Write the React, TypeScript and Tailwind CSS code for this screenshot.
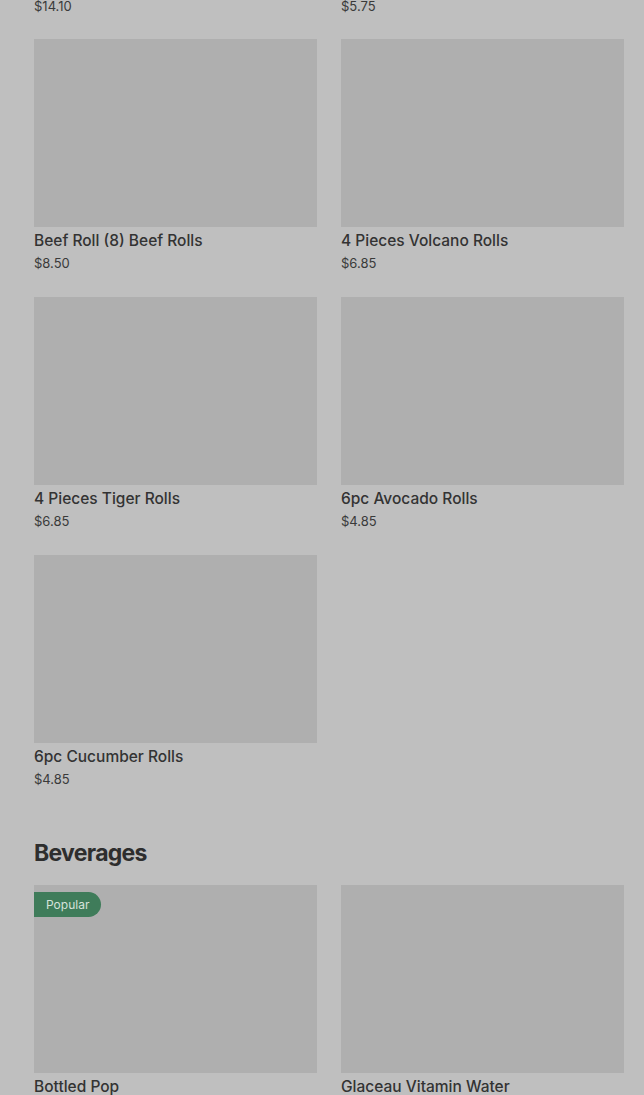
type Item = { name: string; price: string; badge?: string };

// row above the fold: only the prices are still on screen
const scrolledPast = ["$14.10", "$5.75"];

const rolls: Item[] = [
  { name: "Beef Roll (8) Beef Rolls", price: "$8.50" },
  { name: "4 Pieces Volcano Rolls", price: "$6.85" },
  { name: "4 Pieces Tiger Rolls", price: "$6.85" },
  { name: "6pc Avocado Rolls", price: "$4.85" },
  { name: "6pc Cucumber Rolls", price: "$4.85" },
];

const beverages: Item[] = [
  { name: "Bottled Pop", price: "$2.50", badge: "Popular" },
  { name: "Glaceau Vitamin Water", price: "$3.50" },
];

function Card({ item }: { item: Item }) {
  return (
    <div className="flex flex-col">
      <div className="relative h-[188px] bg-[#afafaf]">
        {item.badge && (
          <span className="absolute left-0 top-[7px] flex h-[25px] items-center rounded-r-full bg-[#3f7c5a] pl-3 pr-3 text-[12px] text-[#d6e2da]">
            {item.badge}
          </span>
        )}
      </div>
      <div className="mt-[3px] h-[22px] text-[15.5px] leading-[22px] font-medium text-[#333333]">
        {item.name}
      </div>
      <div className="mt-[1px] h-[20px] text-[13px] leading-[20px] text-[#3a3a3a]">
        {item.price}
      </div>
    </div>
  );
}

export default function App() {
  return (
    <div
      className="min-h-[1095px] overflow-hidden bg-[#bfbfbf] pl-[34px] pr-[20px]"
      style={{ fontFamily: "Inter, 'Noto Sans', sans-serif" }}
    >
      <div className="-mt-[4px] grid grid-cols-2 gap-x-[24px]">
        {scrolledPast.map((p) => (
          <div key={p} className="h-[20px] text-[13px] leading-[20px] text-[#3a3a3a]">
            {p}
          </div>
        ))}
      </div>

      <div className="mt-[23px] grid grid-cols-2 gap-x-[24px] gap-y-[24px]">
        {rolls.map((it) => (
          <Card key={it.name} item={it} />
        ))}
      </div>

      <h2 className="mt-[48px] h-[32px] text-[23px] leading-[32px] font-bold tracking-[-0.7px] text-[#2e2e2e]">
        Beverages
      </h2>

      <div className="mt-[16px] grid grid-cols-2 gap-x-[24px] gap-y-[24px]">
        {beverages.map((it) => (
          <Card key={it.name} item={it} />
        ))}
      </div>
    </div>
  );
}
